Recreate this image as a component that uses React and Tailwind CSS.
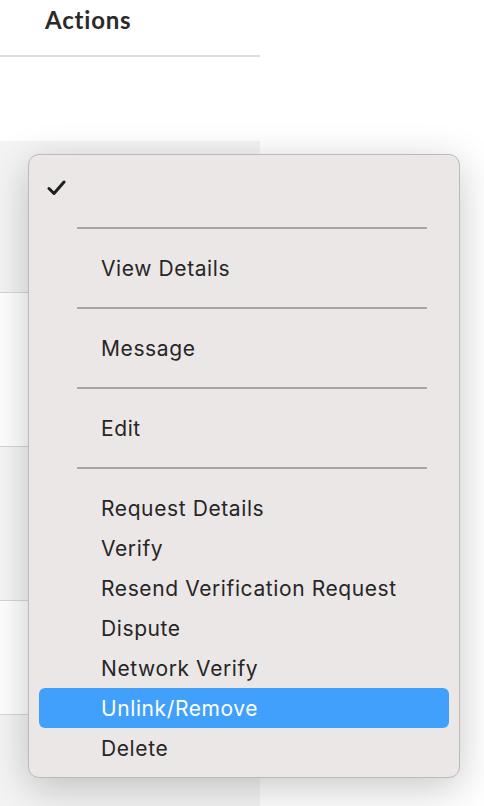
import { useState } from "react";

const groups = [
  ["View Details"],
  ["Message"],
  ["Edit"],
  [
    "Request Details",
    "Verify",
    "Resend Verification Request",
    "Dispute",
    "Network Verify",
    "Unlink/Remove",
    "Delete",
  ],
];

function Separator() {
  return (
    <div className="h-10 flex items-center pl-[48px] pr-[32px]">
      <div className="h-[2px] w-full bg-[#a9a5a4]" />
    </div>
  );
}

function MenuItem({ label, active, onHover }) {
  return (
    <div
      onMouseEnter={onHover}
      className={`h-10 mx-[10px] rounded-[6px] flex items-center pl-[62px] pt-[1px] text-[21px] tracking-[0.6px] ${
        active ? "bg-[#42a0fd] text-white" : "text-[#262626]"
      }`}
    >
      {label}
    </div>
  );
}

export default function App() {
  const [hovered, setHovered] = useState("Unlink/Remove");

  return (
    <div
      className="relative w-[484px] h-[806px] overflow-hidden bg-white"
      style={{ fontFamily: "Inter, 'Open Sans', sans-serif" }}
    >
      {/* Table behind the menu */}
      <div className="w-[260px]">
        <div className="h-[57px] border-b-2 border-[#dddddd] pl-[45px] pt-[2px]">
          <span
            className="text-[24px] font-bold text-[#2a2a2a] tracking-[0.8px]"
            style={{ fontFamily: "Lato, sans-serif" }}
          >
            Actions
          </span>
        </div>
        <div className="h-[84px]" />
        <div className="bg-[#f4f4f4] h-[665px] flex flex-col">
          <div className="h-[152px] border-b border-[#d6d6d6]" />
          <div className="h-[154px] border-b border-[#d6d6d6] bg-white" />
          <div className="h-[154px] border-b border-[#d6d6d6] bg-[#f6f6f6]" />
          <div className="h-[114px] border-b border-[#d6d6d6] bg-white" />
          <div className="flex-1 pl-[48px] pr-[20px]">
            <div className="h-[61px] w-[192px] border-b-2 border-[#8a8a8a] rounded-b-md" />
          </div>
        </div>
      </div>

      {/* Context menu */}
      <div className="absolute left-[28px] top-[154px] w-[432px] h-[624px] rounded-[11px] border border-[#bdbab9] bg-[#ebe7e6] shadow-[0_10px_40px_rgba(0,0,0,0.22)] pt-[13px]">
        <div className="h-10 flex items-center pl-[18px]">
          <svg width="19" height="16" viewBox="0 0 19 16" fill="none">
            <path
              d="M2 8.5 L7 13.5 L17 2"
              stroke="#1f1f1f"
              strokeWidth="3"
              strokeLinecap="round"
              strokeLinejoin="round"
            />
          </svg>
        </div>
        {groups.map((group, gi) => (
          <div key={gi}>
            <Separator />
            {group.map((label) => (
              <MenuItem
                key={label}
                label={label}
                active={hovered === label}
                onHover={() => setHovered(label)}
              />
            ))}
          </div>
        ))}
      </div>
    </div>
  );
}
